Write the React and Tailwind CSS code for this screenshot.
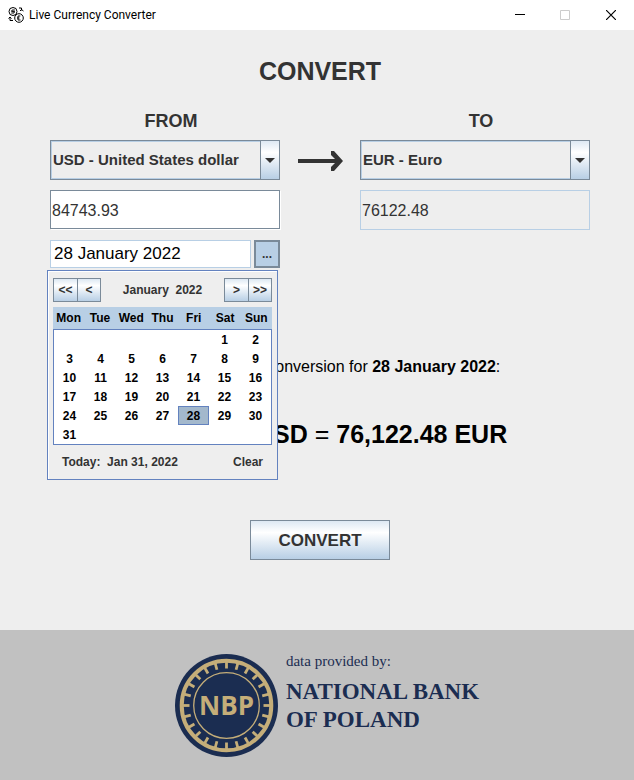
import React, { useState } from "react";

const days = ["Mon", "Tue", "Wed", "Thu", "Fri", "Sat", "Sun"];
const weeks = [0, 1, 2, 3, 4, 5].map((week) =>
  days.map((_, i) => {
    const date = week * 7 + i - 4;
    return date > 0 && date < 32 ? date : null;
  })
);
const metal =
  "border border-[#7a8a99] bg-linear-to-b from-[#dde8f3] via-white via-30% to-[#b8cfe5]";

function TitleBar() {
  return (
    <header className="flex h-[30px] items-center bg-white pl-2 font-[Roboto,sans-serif] text-xs text-black">
      <svg className="mr-[5px] size-4" viewBox="0 0 16 16" fill="none" stroke="#000" aria-hidden="true">
        <circle cx="5" cy="4.5" r="4" />
        <circle cx="11" cy="11" r="4.3" />
        <path d="M6.8 3H4.2L3.5 4.4h3L6 6H3.3M12.3 9H10v4h2.5M9 11h2.5M11 1h2.5v2.5M12 4l1.5-1.5 2 1.5M.5 11.5 2 10l1.5 1.5M2 10v3.5h3" />
      </svg>
      <h1 className="grow">Live Currency Converter</h1>
      <button type="button" aria-label="Minimize" className="flex h-full w-[44px] items-center justify-center">
        <svg className="size-[10px]" viewBox="0 0 10 10"><path d="M0 4.5h10" stroke="#000" /></svg>
      </button>
      <button type="button" aria-label="Maximize" disabled className="flex h-full w-[46px] items-center justify-center">
        <svg className="size-[10px]" viewBox="0 0 10 10"><path d="M.5.5h9v9h-9z" fill="none" stroke="#ccc" /></svg>
      </button>
      <button type="button" aria-label="Close" className="flex h-full w-[46px] items-center justify-center">
        <svg className="size-[10px]" viewBox="0 0 10 10"><path d="m0 0 10 10M10 0 0 10" stroke="#000" strokeWidth="1.2" /></svg>
      </button>
    </header>
  );
}

function CurrencySelect({ id, value }) {
  return (
    <div className="relative h-10">
      <select
        id={id}
        className="h-full w-full appearance-none border border-[#7a8a99] bg-[#eee] pl-[2px] pr-6 text-[15px] font-bold text-[#333] shadow-[inset_0_0_0_1px_#b8cfe5]"
      >
        <option>{value}</option>
      </select>
      <span className={`pointer-events-none absolute inset-y-0 right-0 flex w-5 items-center justify-center ${metal}`}>
        <svg className="h-[5px] w-[10px]" viewBox="0 0 10 5"><path d="M0 0h10L5 5z" fill="#333" /></svg>
      </span>
    </div>
  );
}

function Calendar() {
  return (
    <div
      role="dialog"
      aria-label="Choose a date"
      className="absolute -left-[3px] top-[30px] w-[231px] border border-[#6382bf] bg-[#eee] px-[5px] pt-[7px] text-xs font-bold shadow-[inset_1px_1px_0_#fff]"
    >
      <div className="flex h-6 items-center">
        <button type="button" aria-label="Previous year" className={`h-6 w-[25px] ${metal}`}>&lt;&lt;</button>
        <button type="button" aria-label="Previous month" className={`-ml-px h-6 w-6 ${metal}`}>&lt;</button>
        <span className="grow text-center whitespace-pre">January  2022</span>
        <button type="button" aria-label="Next month" className={`-mr-px h-6 w-[25px] ${metal}`}>&gt;</button>
        <button type="button" aria-label="Next year" className={`h-6 w-6 ${metal}`}>&gt;&gt;</button>
      </div>
      <table className="mt-[5px] w-full table-fixed border-separate border-spacing-0 text-center text-black">
        <thead className="bg-[#b8cfe5]">
          <tr className="h-[22px]">
            {days.map((day) => <th key={day} className="p-0">{day}</th>)}
          </tr>
        </thead>
      </table>
      <table className="w-full table-fixed border-separate border-spacing-0 border border-[#6382bf] bg-white text-center text-black">
        <tbody>
          {weeks.map((week, row) => (
            <tr key={row} className="h-[19px]">
              {week.map((date, i) => (
                <td key={i} className={date === 28 ? "border border-[#6382bf] bg-[#a3b8cc] p-0 leading-4" : "p-0 leading-4"}>
                  {date}
                </td>
              ))}
            </tr>
          ))}
        </tbody>
      </table>
      <div className="flex h-[34px] items-center justify-between px-[9px] text-[#333]">
        <button type="button" className="whitespace-pre">Today:  Jan 31, 2022</button>
        <button type="button">Clear</button>
      </div>
    </div>
  );
}

function BankLogo() {
  return (
    <svg className="size-[103px] shrink-0" viewBox="-51.5 -51.5 103 103" role="img" aria-label="NBP">
      <circle r="51.5" fill="#1b2d51" />
      <circle r="44.8" fill="none" stroke="#c5ae79" strokeWidth="4" />
      {Array.from({ length: 24 }, (_, i) => (
        <path key={i} d="M0-44v7" stroke="#c5ae79" strokeWidth="2.8" transform={`rotate(${i * 15})`} />
      ))}
      <circle r="32.8" fill="none" stroke="#c5ae79" strokeWidth="1.3" />
      <text y="9" textAnchor="middle" fill="#c5ae79" className="font-['Open_Sans',sans-serif] text-[26px] font-bold">NBP</text>
    </svg>
  );
}

export default function App() {
  const [amount, setAmount] = useState("84743.93");
  const [date, setDate] = useState("28 January 2022");
  return (
    <div className="flex min-h-screen flex-col bg-[#eee] font-['Liberation_Sans',Arial,sans-serif] text-[#333]">
      <TitleBar />
      <main className="flex grow flex-col pr-11 pl-[50px]">
        <h2 className="mt-6 text-center text-[25px] leading-[34px] font-bold">CONVERT</h2>
        <div className="mt-[22px] grid grid-cols-[minmax(0,1fr)_80px_minmax(0,1fr)]">
          <div>
            <label htmlFor="from" className="block h-[30px] pl-3 text-center text-lg leading-[22px] font-bold">FROM</label>
            <CurrencySelect id="from" value="USD - United States dollar" />
            <input
              aria-label="Amount"
              value={amount}
              onChange={(e) => setAmount(e.target.value)}
              className="mt-[10px] block h-[39px] w-full border border-[#7a8a99] bg-white px-px pt-[2px] text-base shadow-[1px_1px_0_#fff]"
            />
            <div className="relative mt-[11px] flex h-7 gap-[3px]">
              <input
                aria-label="Date"
                value={date}
                onChange={(e) => setDate(e.target.value)}
                className="min-w-0 grow border border-[#b8cfe5] bg-white px-[3px] text-[17px] text-black"
              />
              <button type="button" aria-label="Open calendar" className="w-[26px] shrink-0 border-2 border-[#7a8a99] bg-[#b8cfe5] text-xs font-bold">...</button>
              <Calendar />
            </div>
          </div>
          <svg className="mx-auto mt-10 h-[22px] w-[46px]" viewBox="0 0 46 22" fill="#333" aria-hidden="true">
            <path d="M1 9h37l-4-4V1h3l9 10-9 10h-3v-4l4-4H1z" />
          </svg>
          <div>
            <label htmlFor="to" className="block h-[30px] pl-3 text-center text-lg leading-[22px] font-bold">TO</label>
            <CurrencySelect id="to" value="EUR - Euro" />
            <input aria-label="Converted amount" readOnly value="76122.48" className="mt-[10px] block h-10 w-full border border-[#b8cfe5] bg-[#eee] px-px pt-[2px] text-base" />
          </div>
        </div>
        <p className="mt-[87px] pl-1 text-center text-base text-black">
          Current currency conversion for <strong>28 January 2022</strong>:
        </p>
        <p className="mt-[37px] pl-1 text-center text-[25px] leading-9 font-bold text-black">
          84,743.93 USD <span className="font-normal">=</span> 76,122.48 EUR
        </p>
        <button type="button" className={`mx-auto mt-[68px] h-10 w-[140px] pt-[2px] text-[17px] font-bold ${metal}`}>CONVERT</button>
      </main>
      <footer className="flex h-[150px] items-center justify-center gap-2 bg-[#c1c1c1] pl-5 text-[#1b2d51]">
        <BankLogo />
        <div className="h-[103px] font-['Liberation_Serif',serif]">
          <p className="text-[15px] leading-[14px]">data provided by:</p>
          <p className="mt-[10px] text-[23px] leading-7 font-bold">NATIONAL BANK<br />OF POLAND</p>
        </div>
      </footer>
    </div>
  );
}
